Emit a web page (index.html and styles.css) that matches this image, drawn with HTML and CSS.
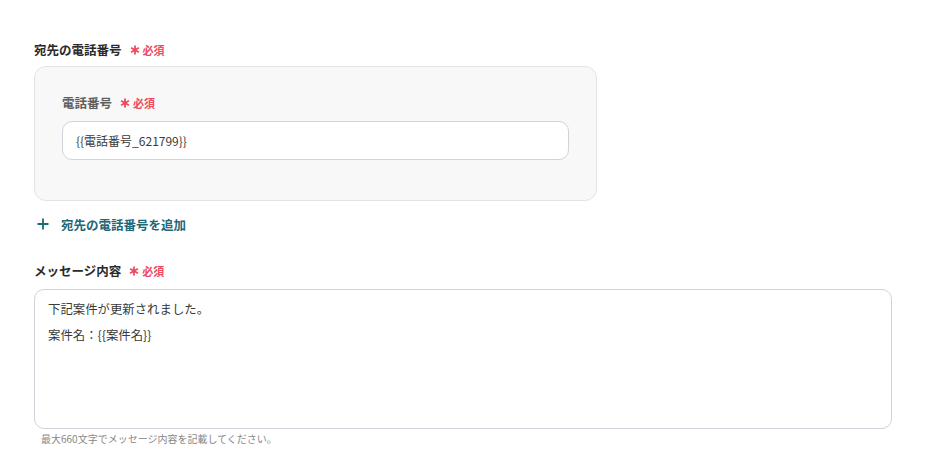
FILE: index.html
```html
<!DOCTYPE html>
<html lang="ja">
<head>
<meta charset="utf-8">
<link rel="stylesheet" href="styles.css">
</head>
<body>
<div class="form">
  <div class="field-label">
    <span class="label-text">宛先の電話番号</span>
    <span class="req"><svg class="ast" viewBox="0 0 10 10"><path d="M5 0.5V9.5M1.1 2.75L8.9 7.25M1.1 7.25L8.9 2.75"/></svg>必須</span>
  </div>
  <div class="group-box">
    <div class="field-label inner">
      <span class="label-text sub">電話番号</span>
      <span class="req"><svg class="ast" viewBox="0 0 10 10"><path d="M5 0.5V9.5M1.1 2.75L8.9 7.25M1.1 7.25L8.9 2.75"/></svg>必須</span>
    </div>
    <div class="input">{{電話番号_621799}}</div>
  </div>
  <div class="add-link">
    <svg class="plus" viewBox="0 0 12 12"><path d="M6 0.5V11.5M0.5 6H11.5"/></svg>
    <span>宛先の電話番号を追加</span>
  </div>
  <div class="field-label second">
    <span class="label-text">メッセージ内容</span>
    <span class="req"><svg class="ast" viewBox="0 0 10 10"><path d="M5 0.5V9.5M1.1 2.75L8.9 7.25M1.1 7.25L8.9 2.75"/></svg>必須</span>
  </div>
  <div class="textarea">
    <p>下記案件が更新されました。</p>
    <p>案件名：{{案件名}}</p>
  </div>
  <div class="help">最大660文字でメッセージ内容を記載してください。</div>
</div>
</body>
</html>
```

FILE: styles.css
```css
* { box-sizing: border-box; }
html, body {
  margin: 0;
  padding: 0;
  background: #ffffff;
  font-family: "Noto Sans CJK JP", "Noto Sans", sans-serif;
  color: #333333;
}
.form {
  padding: 40px 0 0 34px;
  width: 929px;
  height: 467px;
  overflow: hidden;
}
.field-label {
  display: flex;
  align-items: center;
  height: 20px;
  gap: 8px;
}
.label-text {
  font-size: 12.5px;
  font-weight: 700;
  color: #2a2a2a;
  line-height: 20px;
}
.label-text.sub {
  font-size: 12.5px;
  color: #5f5f5f;
}
.req {
  display: flex;
  align-items: center;
  gap: 3px;
  font-size: 11px;
  font-weight: 700;
  color: #ee4a5f;
  line-height: 20px;
}
.ast {
  width: 10px;
  height: 10px;
  fill: none;
  stroke: #ee4a5f;
  stroke-width: 1.8;
}
.group-box {
  margin-top: 6px;
  width: 563px;
  height: 135px;
  background: #f8f8f8;
  border: 1px solid #e3e3e3;
  border-radius: 12px;
  padding: 26px 27px 0 27px;
}
.input {
  margin-top: 8px;
  width: 507px;
  height: 39px;
  background: #ffffff;
  border: 1px solid #cfd3da;
  border-radius: 10px;
  padding: 0 13px;
  font-size: 12px;
  line-height: 37px;
  color: #3a3a3a;
}
.add-link {
  margin-top: 13px;
  height: 20px;
  display: flex;
  align-items: center;
  gap: 12px;
  padding-left: 3px;
  font-size: 12.5px;
  font-weight: 700;
  color: #1e6877;
}
.plus {
  width: 12px;
  height: 12px;
  fill: none;
  stroke: #1e6877;
  stroke-width: 1.8;
}
.field-label.second {
  margin-top: 27px;
}
.textarea {
  margin-top: 8px;
  width: 858px;
  height: 140px;
  border: 1px solid #cfd3da;
  border-radius: 10px;
  padding: 6px 13px;
  font-size: 12.4px;
  color: #3a3a3a;
}
.textarea p {
  margin: 0;
  line-height: 26px;
}
.help {
  margin-top: 2px;
  padding-left: 7px;
  font-size: 10px;
  line-height: 16px;
  color: #888888;
}
```
